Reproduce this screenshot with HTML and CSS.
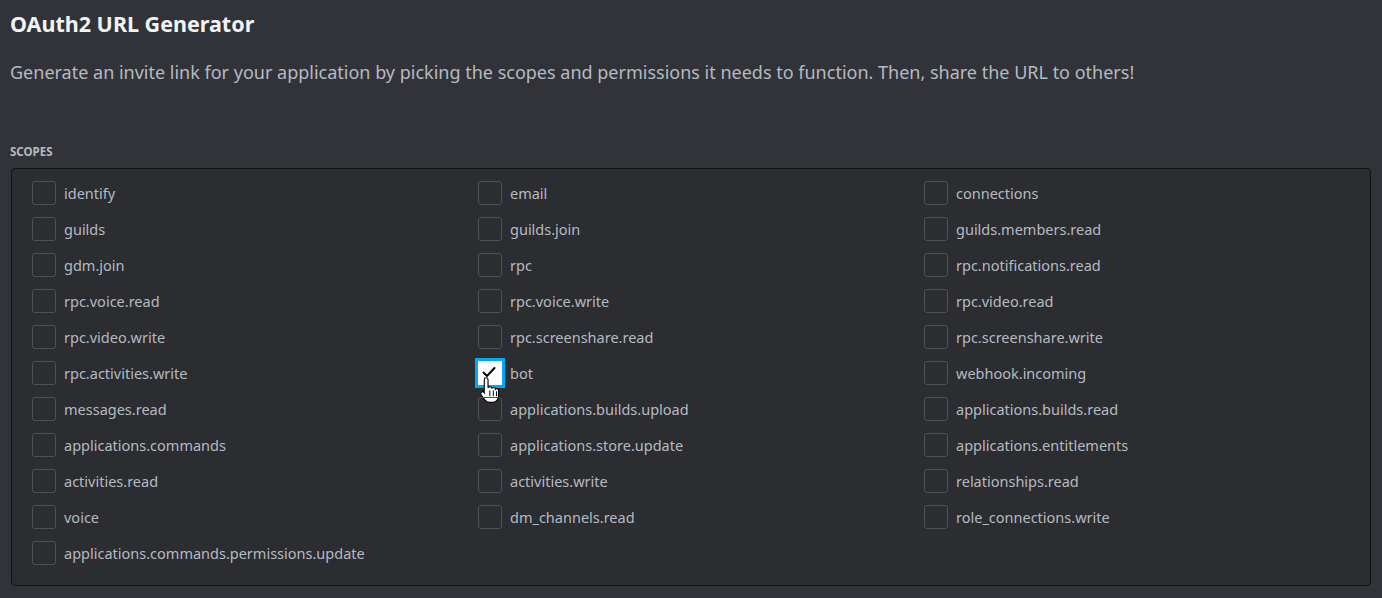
FILE: index.html
```html
<!DOCTYPE html>
<html>
<head>
<meta charset="utf-8">
<link rel="stylesheet" href="styles.css">
</head>
<body>
<main class="page">
  <h1 class="title">OAuth2 URL Generator</h1>
  <p class="desc">Generate an invite link for your application by picking the scopes and permissions it needs to function. Then, share the URL to others!</p>
  <h2 class="label">Scopes</h2>
  <div class="box">
    <label class="item"><span class="cb"></span><span class="txt">identify</span></label>
    <label class="item"><span class="cb"></span><span class="txt">email</span></label>
    <label class="item"><span class="cb"></span><span class="txt">connections</span></label>
    <label class="item"><span class="cb"></span><span class="txt">guilds</span></label>
    <label class="item"><span class="cb"></span><span class="txt">guilds.join</span></label>
    <label class="item"><span class="cb"></span><span class="txt">guilds.members.read</span></label>
    <label class="item"><span class="cb"></span><span class="txt">gdm.join</span></label>
    <label class="item"><span class="cb"></span><span class="txt">rpc</span></label>
    <label class="item"><span class="cb"></span><span class="txt">rpc.notifications.read</span></label>
    <label class="item"><span class="cb"></span><span class="txt">rpc.voice.read</span></label>
    <label class="item"><span class="cb"></span><span class="txt">rpc.voice.write</span></label>
    <label class="item"><span class="cb"></span><span class="txt">rpc.video.read</span></label>
    <label class="item"><span class="cb"></span><span class="txt">rpc.video.write</span></label>
    <label class="item"><span class="cb"></span><span class="txt">rpc.screenshare.read</span></label>
    <label class="item"><span class="cb"></span><span class="txt">rpc.screenshare.write</span></label>
    <label class="item"><span class="cb"></span><span class="txt">rpc.activities.write</span></label>
    <label class="item"><span class="cb checked"><svg class="check" viewBox="0 0 24 24" width="24" height="24"><path d="M5.5 11.5l3.5 3.5 7.5-8" fill="none" stroke="#060607" stroke-width="2" stroke-linecap="round" stroke-linejoin="round"/></svg><svg class="cursor" viewBox="0 0 17 24" width="19" height="27"><path d="M5.5 1.5c1 0 1.7.7 1.7 1.7v7.3c.3-.6 .9-1 1.6-1 1 0 1.7.7 1.7 1.6.3-.6.9-.9 1.6-.9 1 0 1.7.7 1.7 1.6.3-.4.8-.6 1.3-.6.9 0 1.5.7 1.5 1.6v5c0 3.3-2.5 5.7-5.7 5.7H8.5c-1.800 0-3.2-.8-4.2-2.200L1 16.8c-.6-.9-.4-2 .4-2.5.7-.5 1.7-.3 2.2.4l.2.3V3.2c0-1 .7-1.7 1.7-1.7z" fill="#fff" stroke="#000" stroke-width="1"/><path d="M8.8 13v5M11.9 13v5M14.8 13.5v4.5" stroke="#000" stroke-width="0.9" fill="none"/></svg></span><span class="txt">bot</span></label>
    <label class="item"><span class="cb"></span><span class="txt">webhook.incoming</span></label>
    <label class="item"><span class="cb"></span><span class="txt">messages.read</span></label>
    <label class="item"><span class="cb"></span><span class="txt">applications.builds.upload</span></label>
    <label class="item"><span class="cb"></span><span class="txt">applications.builds.read</span></label>
    <label class="item"><span class="cb"></span><span class="txt">applications.commands</span></label>
    <label class="item"><span class="cb"></span><span class="txt">applications.store.update</span></label>
    <label class="item"><span class="cb"></span><span class="txt">applications.entitlements</span></label>
    <label class="item"><span class="cb"></span><span class="txt">activities.read</span></label>
    <label class="item"><span class="cb"></span><span class="txt">activities.write</span></label>
    <label class="item"><span class="cb"></span><span class="txt">relationships.read</span></label>
    <label class="item"><span class="cb"></span><span class="txt">voice</span></label>
    <label class="item"><span class="cb"></span><span class="txt">dm_channels.read</span></label>
    <label class="item"><span class="cb"></span><span class="txt">role_connections.write</span></label>
    <label class="item"><span class="cb"></span><span class="txt">applications.commands.permissions.update</span></label>
  </div>
</main>
</body>
</html>
```
FILE: styles.css
```css
html, body {
  margin: 0;
  padding: 0;
  background: #313338;
}
body {
  font-family: "Noto Sans", "Open Sans", sans-serif;
  color: #b5bac1;
}
.page {
  padding: 10px 11px 12px 11px;
}
.title {
  margin: 0 0 0 -1px;
  font-size: 21.5px;
  line-height: 28px;
  font-weight: 700;
  color: #f2f3f5;
}
.desc {
  margin: 22px 0 0 -1px;
  font-size: 18px;
  line-height: 24px;
  color: #b5bac1;
}
.label {
  margin: 60px 0 0 -1px;
  font-size: 11.5px;
  line-height: 16px;
  font-weight: 700;
  text-transform: uppercase;
  color: #b5bac1;
}
.box {
  margin-top: 8px;
  background: #2b2d31;
  border: 1px solid #111214;
  border-radius: 4px;
  padding: 12px 20px 20px 20px;
  display: grid;
  grid-template-columns: repeat(3, 446px);
  row-gap: 12px;
}
.item {
  display: flex;
  align-items: center;
  gap: 8px;
  height: 24px;
}
.cb {
  position: relative;
  box-sizing: border-box;
  width: 24px;
  height: 24px;
  border: 1px solid #4e5058;
  border-radius: 3px;
  flex: none;
}
.cb.checked {
  background: #fff;
  border: 1px solid #fff;
  border-radius: 0;
  box-shadow: 0 0 0 3px #00a8fc;
}
.check {
  position: absolute;
  left: -1px;
  top: -1px;
}
.cursor {
  position: absolute;
  left: 1px;
  top: 14px;
}
.txt {
  font-size: 14.5px;
  line-height: 20px;
  color: #b5bac1;
}
```
